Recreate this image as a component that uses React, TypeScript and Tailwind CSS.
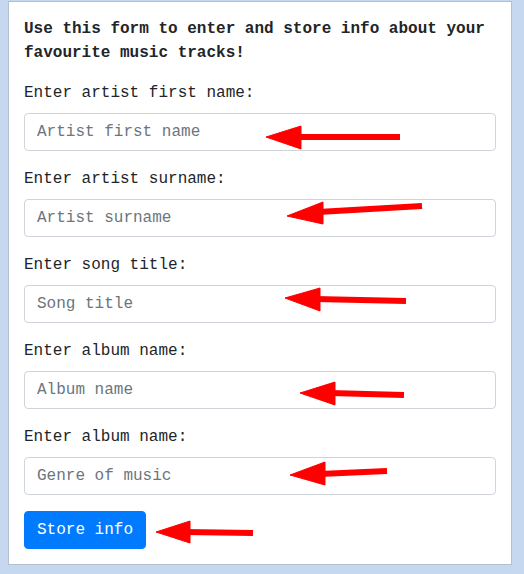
const mono = { fontFamily: '"Liberation Mono", "Courier New", monospace' };

const fields = [
  { label: 'Enter artist first name:', placeholder: 'Artist first name' },
  { label: 'Enter artist surname:', placeholder: 'Artist surname' },
  { label: 'Enter song title:', placeholder: 'Song title' },
  { label: 'Enter album name:', placeholder: 'Album name' },
  { label: 'Enter album name:', placeholder: 'Genre of music' },
];

// hand-drawn red arrows: tip, head back x, head top/bottom y, shaft start/end
const arrows = [
  { tip: [266, 137], back: 301, top: 126, bot: 149, from: [400, 137], to: [296, 137] },
  { tip: [287, 216], back: 323, top: 202, bot: 224, from: [422, 206], to: [318, 212] },
  { tip: [285, 298], back: 320, top: 288, bot: 311, from: [406, 301], to: [315, 299] },
  { tip: [300, 393], back: 335, top: 382, bot: 405, from: [404, 395], to: [330, 393] },
  { tip: [290, 475], back: 325, top: 462, bot: 485, from: [387, 471], to: [320, 474] },
  { tip: [156, 532], back: 190, top: 521, bot: 543, from: [253, 533], to: [185, 532] },
];

function Arrows() {
  return (
    <svg className="pointer-events-none absolute left-0 top-0" width={524} height={574}>
      {arrows.map((a, i) => (
        <g key={i} fill="#ff0000" stroke="#ff0000">
          <line
            x1={a.from[0]}
            y1={a.from[1]}
            x2={a.to[0]}
            y2={a.to[1]}
            strokeWidth={6}
          />
          <polygon points={`${a.tip[0]},${a.tip[1]} ${a.back},${a.top} ${a.back},${a.bot}`} strokeWidth={1} />
        </g>
      ))}
    </svg>
  );
}

export default function App() {
  return (
    <div className="relative min-h-[574px] w-[524px] bg-[#c5d8ef] pl-2 pt-px" style={mono}>
      <div className="w-[504px] border border-[#b3c0d2] bg-white p-[15px] text-[16px] leading-6 text-[#212529]">
        <p className="mb-4 font-bold">
          Use this form to enter and store info about your favourite music tracks!
        </p>
        {fields.map((f, i) => (
          <div key={i} className="mb-4">
            <label className="mb-2 block">{f.label}</label>
            <input
              type="text"
              placeholder={f.placeholder}
              className="block h-[38px] w-full rounded border border-[#ced4da] bg-white px-3 py-1.5 text-[16px] leading-6 text-[#495057] placeholder:text-[#6c757d] focus:outline-none"
              style={mono}
            />
          </div>
        ))}
        <button
          type="button"
          className="block h-[38px] rounded border border-[#007bff] bg-[#007bff] px-3 py-1.5 text-[16px] leading-6 text-white"
          style={mono}
        >
          Store info
        </button>
      </div>
      <Arrows />
    </div>
  );
}
